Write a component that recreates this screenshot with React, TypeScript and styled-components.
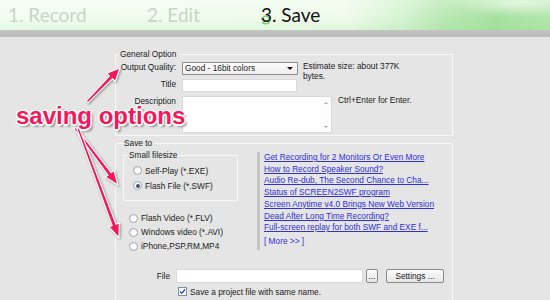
import React from "react";
import styled, { createGlobalStyle } from "styled-components";

const Global = createGlobalStyle`
  html, body { margin: 0; padding: 0; background: #e4e5e4; }
  body { font-family: "Liberation Sans", Arial, sans-serif; }
`;

const Page = styled.div`
  position: relative;
  width: 550px;
  height: 300px;
  overflow: hidden;
  background: #e4e5e4;
  font-family: "Liberation Sans", Arial, sans-serif;
  font-size: 8.3px;
  color: #1b1b1b;
`;

const Header = styled.header`
  height: 30px;
  box-sizing: border-box;
  display: flex;
  align-items: flex-start;
  padding-left: 8px;
  background:
    radial-gradient(ellipse 70px 14px at 520px 2px, rgba(230, 248, 228, 0.9), rgba(230, 248, 228, 0) 100%),
    linear-gradient(to bottom, rgba(255, 255, 255, 0.25) 0%, rgba(255, 255, 255, 0) 60%, rgba(120, 210, 120, 0.12) 100%),
    linear-gradient(to right, #f2fdf0 0%, #eefbeb 63%, #d6f3d2 73%, #b9e7b3 81%, #a7e1a1 90%, #b3e6ad 100%);
`;

const Step = styled.div<{ $w?: number; $active?: boolean }>`
  position: relative;
  width: ${(p) => (p.$w ? `${p.$w}px` : "auto")};
  font-family: Lato, "Open Sans", sans-serif;
  font-size: 19px;
  line-height: 30px;
  white-space: nowrap;
  color: ${(p) => (p.$active ? "#121212" : "#c9d4c8")};
`;

const StepText = styled.span`
  position: relative;
`;

const StepLogo = styled.svg`
  position: absolute;
  left: -2px;
  top: 14px;
  width: 14px;
  height: 12px;
  opacity: 0.75;
`;

const Divider = styled.div`
  height: 7px;
  background: linear-gradient(to bottom, #c3c3c3, #bcbcbc);
`;

const Body = styled.main`
  padding-left: 115px;
`;

const GroupBase = styled.fieldset`
  box-sizing: border-box;
  min-width: 0;
  margin: 0;
  border: 1px solid #f8f8f8;
  box-shadow: inset 0 0 0 0 transparent;
`;

const GeneralGroup = styled(GroupBase)`
  width: 338px;
  margin-top: 12px;
  padding: 3px 0 2px 3px;
`;

const SaveGroup = styled(GroupBase)`
  width: 338px;
  height: 200px;
  margin-top: 2px;
  padding: 2px 0 0 7px;
`;

const SubGroup = styled(GroupBase)`
  width: 115px;
  padding: 3px 0 7px 4px;
`;

const Legend = styled.legend`
  padding: 0 1px;
  margin: 0;
  line-height: 10px;
  font-size: 8.3px;
  color: #1b1b1b;
`;

const FormGrid = styled.div`
  display: grid;
  grid-template-columns: 57px auto;
  column-gap: 6px;
  row-gap: 4px;
  align-items: start;
`;

const FieldLabel = styled.div`
  text-align: right;
  line-height: 10px;
  white-space: nowrap;
`;

const ControlRow = styled.div<{ $h: number; $gap: number }>`
  display: flex;
  align-items: flex-start;
  height: ${(p) => p.$h}px;
  gap: ${(p) => p.$gap}px;
`;

const Note = styled.div`
  line-height: 9.5px;
  white-space: nowrap;
`;

const SelectBox = styled.div`
  box-sizing: border-box;
  width: 116px;
  height: 13px;
  border: 1px solid #8f8f8f;
  background: linear-gradient(to bottom, #fbfbfb, #efefef);
  display: flex;
  align-items: center;
  justify-content: space-between;
  padding: 0 4px 0 2px;
  line-height: 11px;
`;

const Caret = styled.span`
  width: 0;
  height: 0;
  border-left: 3px solid transparent;
  border-right: 3px solid transparent;
  border-top: 3px solid #111;
`;

const TextBox = styled.div<{ $w: number; $h: number }>`
  box-sizing: border-box;
  width: ${(p) => p.$w}px;
  height: ${(p) => p.$h}px;
  background: #fff;
  border: 1px solid #d9d9d9;
`;

const MemoBox = styled.div`
  box-sizing: border-box;
  width: 150px;
  height: 37px;
  background: #fff;
  border: 1px solid #d9d9d9;
  display: flex;
  justify-content: flex-end;
`;

const ScrollTrack = styled.div`
  width: 11px;
  display: flex;
  flex-direction: column;
  align-items: center;
  justify-content: space-between;
  padding: 5px 0 4px;
  box-sizing: border-box;
  background: #fdfdfd;
`;

const ScrollArrow = styled.span<{ $up?: boolean }>`
  width: 0;
  height: 0;
  border-left: 2px solid transparent;
  border-right: 2px solid transparent;
  ${(p) => (p.$up ? "border-bottom: 2px solid #a9a9a9;" : "border-top: 2px solid #a9a9a9;")}
`;

const SaveTop = styled.div`
  display: flex;
  align-items: flex-start;
`;

const LeftCol = styled.div`
  width: 115px;
  display: flex;
  flex-direction: column;
`;

const RadioList = styled.div<{ $indent: number; $top: number }>`
  display: flex;
  flex-direction: column;
  padding-left: ${(p) => p.$indent}px;
  margin-top: ${(p) => p.$top}px;
`;

const RadioRow = styled.label<{ $h: number }>`
  display: flex;
  align-items: center;
  gap: 3px;
  height: ${(p) => p.$h}px;
  white-space: nowrap;
`;

const RadioDot = styled.span<{ $checked?: boolean }>`
  box-sizing: border-box;
  width: 9px;
  height: 9px;
  border-radius: 50%;
  border: 1px solid #a3a8ad;
  background: radial-gradient(circle at 60% 60%, #ffffff 30%, #e3e4e6 100%);
  display: flex;
  align-items: center;
  justify-content: center;
  flex: none;
  &::after {
    content: "";
    display: ${(p) => (p.$checked ? "block" : "none")};
    width: 4px;
    height: 4px;
    border-radius: 50%;
    background: #3b5678;
  }
`;

const LinkCol = styled.div`
  margin-left: 19px;
  margin-top: 2px;
  border-left: 3px solid #c5c5c5;
  padding: 0 0 2px 4px;
  display: flex;
  flex-direction: column;
`;

const NewsLink = styled.a`
  display: block;
  line-height: 11.7px;
  color: #3030d8;
  text-decoration: underline;
  white-space: nowrap;
`;

const MoreLink = styled.a`
  display: block;
  line-height: 11.7px;
  margin-top: 2.5px;
  color: #3030d8;
  text-decoration: none;
`;

const FileRow = styled.div`
  display: flex;
  align-items: center;
  margin-top: 16px;
  height: 14px;
`;

const FileLabel = styled.span`
  width: 47px;
  text-align: right;
  margin-right: 6px;
`;

const Button = styled.div<{ $w: number; $ml: number }>`
  box-sizing: border-box;
  width: ${(p) => p.$w}px;
  height: 14px;
  margin-left: ${(p) => p.$ml}px;
  border: 1px solid #8a8a8a;
  border-radius: 2px;
  background: linear-gradient(to bottom, #fdfdfd, #e6e6e6);
  display: flex;
  align-items: center;
  justify-content: center;
  line-height: 10px;
  white-space: nowrap;
`;

const CheckRow = styled.label`
  display: flex;
  align-items: center;
  gap: 3px;
  margin-top: 4px;
  padding-left: 55px;
  height: 9px;
  white-space: nowrap;
`;

const CheckBox = styled.span`
  box-sizing: border-box;
  width: 9px;
  height: 9px;
  border: 1px solid #7f91a8;
  background: #fff;
  display: flex;
  align-items: center;
  justify-content: center;
  flex: none;
`;

const Callout = styled.div`
  position: absolute;
  left: 16px;
  top: 104px;
  font-family: "Liberation Sans", Arial, sans-serif;
  font-weight: bold;
  font-size: 24px;
  line-height: 24px;
  color: #f2185c;
  white-space: nowrap;
  text-shadow:
    1.5px 0 0 #fff, -1.5px 0 0 #fff, 0 1.5px 0 #fff, 0 -1.5px 0 #fff,
    1px 1px 0 #fff, -1px -1px 0 #fff, 1px -1px 0 #fff, -1px 1px 0 #fff,
    2.5px 2.5px 2px rgba(0, 0, 0, 0.35);
`;

const ArrowLayer = styled.svg`
  position: absolute;
  left: 0;
  top: 0;
  width: 550px;
  height: 300px;
  pointer-events: none;
  filter: drop-shadow(1px 1px 1px rgba(0, 0, 0, 0.35));
`;

function arrowPoints(
  tx: number, ty: number, hx: number, hy: number,
  w0: number, w1: number, hl: number, hw: number
): string {
  const dx = hx - tx;
  const dy = hy - ty;
  const len = Math.hypot(dx, dy);
  const ux = dx / len;
  const uy = dy / len;
  const nx = -uy;
  const ny = ux;
  const neckX = hx - ux * hl;
  const neckY = hy - uy * hl;
  const pts: [number, number][] = [
    [tx + nx * w0 / 2, ty + ny * w0 / 2],
    [neckX + nx * w1 / 2, neckY + ny * w1 / 2],
    [neckX + nx * hw / 2, neckY + ny * hw / 2],
    [hx, hy],
    [neckX - nx * hw / 2, neckY - ny * hw / 2],
    [neckX - nx * w1 / 2, neckY - ny * w1 / 2],
    [tx - nx * w0 / 2, ty - ny * w0 / 2],
  ];
  return pts.map(([x, y]) => `${x.toFixed(1)},${y.toFixed(1)}`).join(" ");
}

const arrows = [
  arrowPoints(87, 102, 120, 68, 2.5, 4, 13, 12),
  arrowPoints(75, 128, 118, 185, 2.5, 4, 14, 11),
  arrowPoints(78, 128, 119, 238, 2.5, 4, 14, 11),
];

const links = [
  "Get Recording for 2 Monitors Or Even More",
  "How to Record Speaker Sound?",
  "Audio Re-dub, The Second Chance to Cha...",
  "Status of SCREEN2SWF program",
  "Screen Anytime v4.0 Brings New Web Version",
  "Dead After Long Time Recording?",
  "Full-screen replay for both SWF and EXE f...",
];

export default function App() {
  return (
    <Page>
      <Global />
      <Header>
        <Step $w={139}>1. Record</Step>
        <Step $w={114}>2. Edit</Step>
        <Step $active>
          <StepLogo viewBox="0 0 14 12">
            <path d="M3 6 A4 4 0 0 1 10 3.5" fill="none" stroke="#4fbf4f" strokeWidth="1.4" />
            <path d="M11 6 A4 4 0 0 1 4 8.5" fill="none" stroke="#4fbf4f" strokeWidth="1.4" />
            <path d="M9 1.5 L11.5 4 L8.5 4.8 Z" fill="#4fbf4f" />
            <path d="M5 10.5 L2.5 8 L5.5 7.2 Z" fill="#4fbf4f" />
          </StepLogo>
          <StepText>3. Save</StepText>
        </Step>
      </Header>
      <Divider />
      <Body>
        <GeneralGroup>
          <Legend>General Option</Legend>
          <FormGrid>
            <FieldLabel>Output Quality:</FieldLabel>
            <ControlRow $h={13} $gap={5}>
              <SelectBox>
                <span>Good - 16bit colors</span>
                <Caret />
              </SelectBox>
              <Note>
                Estimate size: about 377K
                <br />
                bytes.
              </Note>
            </ControlRow>
            <FieldLabel>Title</FieldLabel>
            <ControlRow $h={13} $gap={0}>
              <TextBox $w={115} $h={13} />
            </ControlRow>
            <FieldLabel>Description</FieldLabel>
            <ControlRow $h={37} $gap={6}>
              <MemoBox>
                <ScrollTrack>
                  <ScrollArrow $up />
                  <ScrollArrow />
                </ScrollTrack>
              </MemoBox>
              <Note>Ctrl+Enter for Enter.</Note>
            </ControlRow>
          </FormGrid>
        </GeneralGroup>
        <SaveGroup>
          <Legend>Save to</Legend>
          <SaveTop>
            <LeftCol>
              <SubGroup>
                <Legend>Small filesize</Legend>
                <RadioList $indent={5} $top={0}>
                  <RadioRow $h={15}>
                    <RadioDot />
                    Self-Play (*.EXE)
                  </RadioRow>
                  <RadioRow $h={15}>
                    <RadioDot $checked />
                    Flash File (*.SWF)
                  </RadioRow>
                </RadioList>
              </SubGroup>
              <RadioList $indent={6} $top={10}>
                <RadioRow $h={14}>
                  <RadioDot />
                  Flash Video (*.FLV)
                </RadioRow>
                <RadioRow $h={14}>
                  <RadioDot />
                  Windows video (*.AVI)
                </RadioRow>
                <RadioRow $h={14}>
                  <RadioDot />
                  iPhone,PSP,RM,MP4
                </RadioRow>
              </RadioList>
            </LeftCol>
            <LinkCol>
              {links.map((l) => (
                <NewsLink key={l}>{l}</NewsLink>
              ))}
              <MoreLink>[ More &gt;&gt; ]</MoreLink>
            </LinkCol>
          </SaveTop>
          <FileRow>
            <FileLabel>File</FileLabel>
            <TextBox $w={187} $h={14} />
            <Button $w={12} $ml={3}>...</Button>
            <Button $w={58} $ml={8}>Settings ...</Button>
          </FileRow>
          <CheckRow>
            <CheckBox>
              <svg width="7" height="7" viewBox="0 0 7 7">
                <path d="M1 3.5 L2.8 5.3 L6 1.5" fill="none" stroke="#2b4fc4" strokeWidth="1.4" />
              </svg>
            </CheckBox>
            Save a project file with same name.
          </CheckRow>
        </SaveGroup>
      </Body>
      <ArrowLayer viewBox="0 0 550 300">
        {arrows.map((p, i) => (
          <polygon key={i} points={p} fill="#f5175a" stroke="#fff" strokeWidth="1.2" strokeLinejoin="round" />
        ))}
      </ArrowLayer>
      <Callout>saving options</Callout>
    </Page>
  );
}
